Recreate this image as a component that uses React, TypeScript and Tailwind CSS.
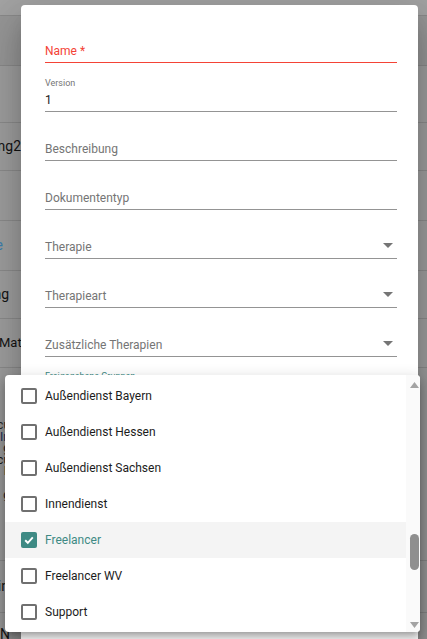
import React from "react";

function Field({ label, color = "text-[#757575]", line = "border-[#949494]" }: { label: string; color?: string; line?: string }) {
  return (
    <div className={`flex h-[49px] items-end border-b ${line} pb-[4px]`}>
      <span className={`text-[12px] leading-[14px] ${color}`}>{label}</span>
    </div>
  );
}

function SelectField({ label }: { label: string }) {
  return (
    <div className="flex h-[49px] items-end justify-between border-b border-[#949494] pb-[4px]">
      <span className="text-[12px] leading-[14px] text-[#757575]">{label}</span>
      <svg width="10" height="5" viewBox="0 0 10 5" className="mb-[6px] mr-[4px]">
        <polygon points="0,0 10,0 5,5" fill="#757575" />
      </svg>
    </div>
  );
}

function Check({ checked }: { checked?: boolean }) {
  if (checked) {
    return (
      <span className="flex h-[16px] w-[16px] items-center justify-center rounded-[2px] bg-[#3e8a84]">
        <svg width="12" height="12" viewBox="0 0 12 12">
          <path d="M2.2 6.3 L4.8 8.8 L9.8 3.4" stroke="white" strokeWidth="1.9" fill="none" />
        </svg>
      </span>
    );
  }
  return <span className="h-[16px] w-[16px] rounded-[2px] border-2 border-[#707070]" />;
}

function Cell({ text, w = "w-[21px]", cls = "" }: { text: string; w?: string; cls?: string }) {
  return (
    <div className={`flex ${w} justify-end overflow-hidden whitespace-nowrap`}>
      <span className={cls}>{text}</span>
    </div>
  );
}

export default function App() {
  const items = [
    "Außendienst Bayern",
    "Außendienst Hessen",
    "Außendienst Sachsen",
    "Innendienst",
    "Freelancer",
    "Freelancer WV",
    "Support",
  ];
  const multi: [string, string][] = [
    ["cu", "text-[#2a2a2a]"],
    ["In", "text-[#1a2f5a]"],
    ["g", "text-[#1b1b1b]"],
    ["cu", "text-[#1b1b1b]"],
    ["k", "text-[#1b1b1b]"],
    [")", "text-[#1f4f8a]"],
    ["g", "text-[#1b1b1b]"],
    ["r", "text-[#1f4f8a]"],
  ];
  return (
    <div className="relative h-[639px] w-[427px] overflow-hidden bg-[#9f9f9f] font-[Roboto,sans-serif] text-[14px] text-[#141414]">
      {/* background table behind backdrop */}
      <div className="flex flex-col">
        <div className="h-[16px] border-b border-[#8a8a8a] bg-[#a3a3a3]" />
        <div className="h-[50px] border-b border-[#8a8a8a] bg-[#979797]" />
        <div className="h-[57px] border-b border-[#8c8c8c]" />
        <div className="flex h-[48px] items-center border-b border-[#8c8c8c]">
          <Cell text="Schulung2" />
        </div>
        <div className="h-[50px] border-b border-[#8c8c8c]" />
        <div className="flex h-[50px] items-center border-b border-[#8c8c8c]">
          <Cell text="e" w="w-[3px]" cls="text-[#3d7fb0]" />
        </div>
        <div className="flex h-[48px] items-center border-b border-[#8c8c8c]">
          <Cell text="Meeting" w="w-[9px]" />
        </div>
        <div className="flex h-[49px] items-center border-b border-[#8c8c8c]">
          <div className="ml-[-1px] whitespace-nowrap text-[13px]">Matching</div>
        </div>
        <div className="flex h-[193px] flex-col border-b border-[#8c8c8c] pt-[52px]">
          {multi.map(([v, c], i) => (
            <div key={i} className="flex h-[11.6px] w-[10px] items-center justify-end overflow-hidden whitespace-nowrap text-[12px] leading-[11.6px]">
              <span className={c}>{v}</span>
            </div>
          ))}
        </div>
        <div className="flex h-[52px] items-center border-b border-[#8c8c8c]">
          <Cell text="Termin" w="w-[9px]" />
        </div>
        <div className="flex h-[40px] items-start pt-[11px]">
          <div className="w-[200px] whitespace-nowrap">N</div>
          <div className="whitespace-nowrap text-[#1a1a1a]">26.07.2024 11:33 Uhr</div>
        </div>
      </div>

      {/* dialog */}
      <div className="absolute left-[21px] top-[5px] h-[700px] w-[397px] rounded-[4px] bg-white pl-[24px] pr-[21px] pt-[9px] shadow-[0_11px_15px_-7px_rgba(0,0,0,0.2),0_24px_38px_3px_rgba(0,0,0,0.14),0_9px_46px_8px_rgba(0,0,0,0.12)]">
        <div className="flex flex-col">
          <Field label="Name *" color="text-[#f44336]" line="border-[#f44336]" />
          <div className="flex h-[49px] flex-col justify-end border-b border-[#949494] pb-[4px]">
            <span className="text-[9px] leading-[11px] text-[#757575]">Version</span>
            <span className="mt-[4px] text-[12px] leading-[14px] text-[#212121]">1</span>
          </div>
          <Field label="Beschreibung" />
          <Field label="Dokumententyp" />
          <SelectField label="Therapie" />
          <SelectField label="Therapieart" />
          <SelectField label="Zusätzliche Therapien" />
          <span className="mt-[14px] text-[9px] leading-[11px] text-[#3e8a84]">Freigegebene Gruppen</span>
        </div>
      </div>

      {/* dropdown menu */}
      <div className="absolute left-[5px] top-[375px] flex h-[257px] w-[415px] overflow-hidden rounded-[4px] bg-white shadow-[0_5px_5px_-3px_rgba(0,0,0,0.2),0_8px_10px_1px_rgba(0,0,0,0.14),0_3px_14px_2px_rgba(0,0,0,0.12)]">
        <div className="flex flex-1 flex-col pt-[2.5px]">
          {items.map((it) => {
            const sel = it === "Freelancer";
            return (
              <div key={it} className={`flex h-[36px] shrink-0 items-center gap-[8px] pl-[16px] ${sel ? "bg-[#f4f4f4]" : ""}`}>
                <Check checked={sel} />
                <span className={`text-[12px] leading-[14px] ${sel ? "text-[#3e8a84]" : "text-[#1c1c1c]"}`}>{it}</span>
              </div>
            );
          })}
        </div>
        <div className="flex w-[14px] flex-col items-center bg-[#fafafa] pb-[4px] pt-[7px]">
          <svg width="9" height="6" viewBox="0 0 9 6" className="ml-[3px]">
            <polygon points="0,6 9,6 4.5,0" fill="#a3a3a3" />
          </svg>
          <div className="flex-1">
            <div className="ml-[3px] mt-[146px] h-[36px] w-[9px] rounded-full bg-[#8f8f8f]" />
          </div>
          <svg width="9" height="6" viewBox="0 0 9 6" className="ml-[3px]">
            <polygon points="0,0 9,0 4.5,6" fill="#a3a3a3" />
          </svg>
        </div>
      </div>
    </div>
  );
}
